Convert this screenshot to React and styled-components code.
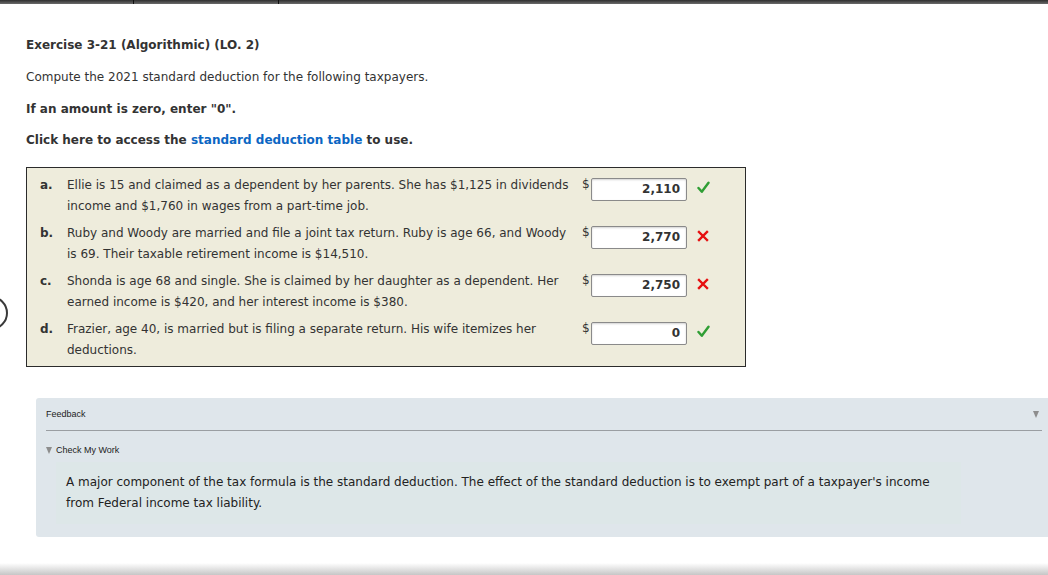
import React from "react";
import styled, { createGlobalStyle } from "styled-components";

const Global = createGlobalStyle`
  html, body { margin: 0; padding: 0; background: #fff; }
  body { font-family: "DejaVu Sans", Verdana, sans-serif; color: #333; }
`;

const Root = styled.div`
  position: relative;
  width: 1048px;
  height: 575px;
  overflow: hidden;
  display: flex;
  flex-direction: column;
`;

const TopBar = styled.div`
  display: flex;
  height: 4px;
  background: linear-gradient(#2e2e2e, #6b6b6b);
`;

const TopSeg = styled.div`
  width: ${(p) => (p.$w ? `${p.$w}px` : "auto")};
  flex: ${(p) => (p.$w ? "none" : "1")};
  border-right: ${(p) => (p.$last ? "none" : "1px solid #111")};
`;

const Content = styled.div`
  padding-left: 26px;
  flex: 1;
`;

const Title = styled.h1`
  margin: 33px 0 0;
  font-size: 12px;
  line-height: 16px;
  font-weight: bold;
  color: #333;
`;

const Para = styled.p`
  margin: ${(p) => (p.$tight ? "15px" : "16px")} 0 0;
  font-size: 12px;
  line-height: 16px;
  font-weight: ${(p) => (p.$bold ? "bold" : "normal")};
`;

const Link = styled.a`
  color: #0b66c3;
  text-decoration: none;
`;

const Box = styled.div`
  box-sizing: border-box;
  margin-top: 19px;
  width: 720px;
  border: 1px solid #2b2b2b;
  background: #eeecdc;
  padding: 7px 0 5px 13px;
  display: flex;
  flex-direction: column;
  gap: 6px;
`;

const Row = styled.div`
  display: grid;
  grid-template-columns: 27px 516px 8px 96px 10px 16px;
  align-items: start;
  font-size: 12px;
  line-height: 21px;
`;

const Label = styled.span`
  font-weight: bold;
`;

const Text = styled.span`
  padding-right: 8px;
`;

const Dollar = styled.span`
  grid-column: 3;
  font-size: 12px;
  line-height: 16px;
  margin-top: 1px;
  margin-left: -1px;
  color: #333;
`;

const Input = styled.div`
  box-sizing: border-box;
  margin-top: 3px;
  height: 23px;
  background: #fff;
  border: 1px solid #8a8a8a;
  border-radius: 2px;
  box-shadow: inset 0 1px 2px rgba(0, 0, 0, 0.18);
  text-align: right;
  padding-right: 6px;
  font-weight: bold;
  font-size: 12px;
  line-height: 21px;
  color: #333;
`;

const Mark = styled.span`
  grid-column: 6;
  margin-top: 6px;
  display: flex;
`;

const Panel = styled.div`
  margin: 31px 0 0 10px;
  background: #dfe6eb;
  border-radius: 3px 0 0 3px;
  padding: 10px 6px 13px 10px;
`;

const PanelHead = styled.div`
  display: flex;
  justify-content: space-between;
  align-items: center;
  padding-bottom: 10px;
  border-bottom: 1px solid #9a9ea2;
  font-family: "Liberation Sans", Arial, sans-serif;
  font-size: 9px;
  line-height: 12px;
  color: #222;
`;

const Triangle = styled.span`
  display: inline-block;
  width: 0;
  height: 0;
  border-left: ${(p) => p.$s / 2}px solid transparent;
  border-right: ${(p) => p.$s / 2}px solid transparent;
  border-top: ${(p) => p.$h || p.$s}px solid #8d8d8d;
  margin-right: ${(p) => p.$mr || 0}px;
`;

const Toggle = styled.div`
  margin-top: 13px;
  display: flex;
  align-items: center;
  gap: 4px;
  font-family: "Liberation Sans", Arial, sans-serif;
  font-size: 9px;
  line-height: 13px;
  color: #222;
`;

const Explain = styled.div`
  margin: 5px 0 0 10px;
  width: 885px;
  background: #dde7e8;
  padding: 10px;
  font-size: 12px;
  line-height: 21px;
  color: #222;
`;

const Footer = styled.div`
  height: 12px;
  background: linear-gradient(#ffffff, #c6c6c6);
`;

const EdgeIcon = styled.svg`
  position: absolute;
  left: 0;
  top: 293px;
`;

const Check = () => (
  <svg width="13" height="13" viewBox="0 0 13 13">
    <path d="M1.5 7 L4.8 10.8 L11.5 1.8" fill="none" stroke="#2f9e34" strokeWidth="2.4" strokeLinecap="round" strokeLinejoin="round" />
  </svg>
);

const Cross = () => (
  <svg width="12" height="12" viewBox="0 0 12 12" style={{ marginTop: 1 }}>
    <path d="M2 2 L10 10 M10 2 L2 10" fill="none" stroke="#e60f0f" strokeWidth="2.4" strokeLinecap="square" />
  </svg>
);

const rows = [
  {
    l: "a.",
    t: "Ellie is 15 and claimed as a dependent by her parents. She has $1,125 in dividends income and $1,760 in wages from a part-time job.",
    v: "2,110",
    ok: true,
  },
  {
    l: "b.",
    t: "Ruby and Woody are married and file a joint tax return. Ruby is age 66, and Woody is 69. Their taxable retirement income is $14,510.",
    v: "2,770",
    ok: false,
  },
  {
    l: "c.",
    t: "Shonda is age 68 and single. She is claimed by her daughter as a dependent. Her earned income is $420, and her interest income is $380.",
    v: "2,750",
    ok: false,
  },
  {
    l: "d.",
    t: "Frazier, age 40, is married but is filing a separate return. His wife itemizes her deductions.",
    v: "0",
    ok: true,
  },
];

export default function App() {
  return (
    <Root>
      <Global />
      <TopBar>
        <TopSeg $w={133} />
        <TopSeg $w={144} />
        <TopSeg $last />
      </TopBar>
      <Content>
        <Title>Exercise 3-21 (Algorithmic) (LO. 2)</Title>
        <Para>Compute the 2021 standard deduction for the following taxpayers.</Para>
        <Para $bold>If an amount is zero, enter "0".</Para>
        <Para $bold $tight>
          Click here to access the <Link href="#">standard deduction table</Link> to use.
        </Para>
        <Box>
          {rows.map((r) => (
            <Row key={r.l}>
              <Label>{r.l}</Label>
              <Text>{r.t}</Text>
              <Dollar>$</Dollar>
              <Input>{r.v}</Input>
              <Mark>{r.ok ? <Check /> : <Cross />}</Mark>
            </Row>
          ))}
        </Box>
        <Panel>
          <PanelHead>
            <span>Feedback</span>
            <Triangle $s={6} $h={7} $mr={3} />
          </PanelHead>
          <Toggle>
            <Triangle $s={6} $h={7} />
            <span>Check My Work</span>
          </Toggle>
          <Explain>
            A major component of the tax formula is the standard deduction. The effect of the standard deduction is to exempt part of a taxpayer's income from Federal income tax liability.
          </Explain>
        </Panel>
      </Content>
      <Footer />
      <EdgeIcon width="10" height="40" viewBox="0 0 10 40">
        <circle cx="-9" cy="20" r="16" fill="none" stroke="#3a3a3a" strokeWidth="2" />
      </EdgeIcon>
    </Root>
  );
}
